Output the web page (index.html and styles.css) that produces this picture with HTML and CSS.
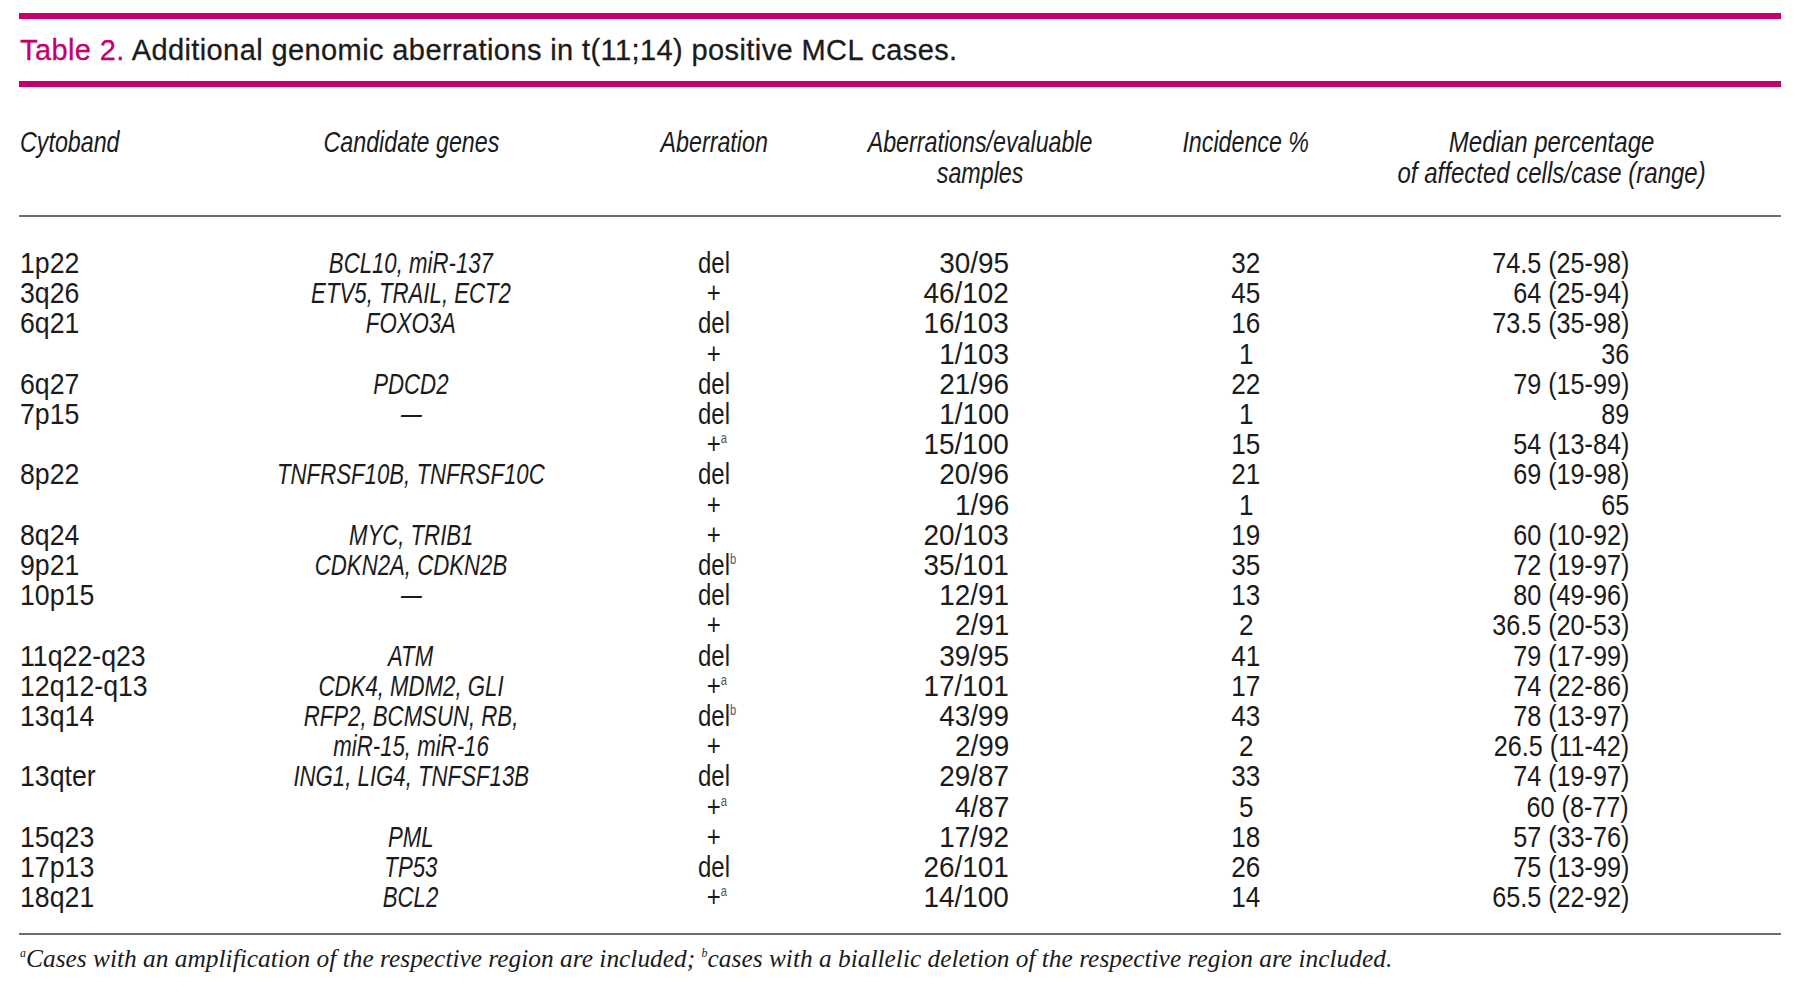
FILE: index.html
```html
<!DOCTYPE html>
<html lang="en">
<head>
<meta charset="utf-8">
<title>Table 2</title>
<link rel="stylesheet" href="styles.css">
</head>
<body>
<div class="page">
  <div class="pink-rule top"></div>
  <h1 class="caption"><span class="label">Table 2.</span> Additional genomic aberrations in t(11;14) positive MCL cases.</h1>
  <div class="pink-rule"></div>
  <table class="data">
    <colgroup>
      <col class="c1"><col class="c2"><col class="c3"><col class="c4"><col class="c5"><col class="c6">
    </colgroup>
    <thead>
      <tr>
        <th class="l"><span>Cytoband</span></th>
        <th><span>Candidate genes</span></th>
        <th><span>Aberration</span></th>
        <th><span>Aberrations/evaluable<br>samples</span></th>
        <th><span>Incidence %</span></th>
        <th class="med"><span>Median percentage<br>of affected cells/case (range)</span></th>
      </tr>
    </thead>
    <tbody>
      <tr class="first"><td><span>1p22</span></td><td class="g"><span>BCL10, miR-137</span></td><td class="a"><span>del</span></td><td class="n"><span>30/95</span></td><td class="i"><span>32</span></td><td class="m"><span>74.5 (25-98)</span></td></tr>
      <tr><td><span>3q26</span></td><td class="g"><span>ETV5, TRAIL, ECT2</span></td><td class="a"><span>+</span></td><td class="n"><span>46/102</span></td><td class="i"><span>45</span></td><td class="m"><span>64 (25-94)</span></td></tr>
      <tr><td><span>6q21</span></td><td class="g"><span>FOXO3A</span></td><td class="a"><span>del</span></td><td class="n"><span>16/103</span></td><td class="i"><span>16</span></td><td class="m"><span>73.5 (35-98)</span></td></tr>
      <tr><td></td><td class="g"></td><td class="a"><span>+</span></td><td class="n"><span>1/103</span></td><td class="i"><span>1</span></td><td class="m"><span>36</span></td></tr>
      <tr><td><span>6q27</span></td><td class="g"><span>PDCD2</span></td><td class="a"><span>del</span></td><td class="n"><span>21/96</span></td><td class="i"><span>22</span></td><td class="m"><span>79 (15-99)</span></td></tr>
      <tr><td><span>7p15</span></td><td class="g"><span class="dash">–</span></td><td class="a"><span>del</span></td><td class="n"><span>1/100</span></td><td class="i"><span>1</span></td><td class="m"><span>89</span></td></tr>
      <tr><td></td><td class="g"></td><td class="a"><span>+<i class="sup">a</i></span></td><td class="n"><span>15/100</span></td><td class="i"><span>15</span></td><td class="m"><span>54 (13-84)</span></td></tr>
      <tr><td><span>8p22</span></td><td class="g"><span>TNFRSF10B, TNFRSF10C</span></td><td class="a"><span>del</span></td><td class="n"><span>20/96</span></td><td class="i"><span>21</span></td><td class="m"><span>69 (19-98)</span></td></tr>
      <tr><td></td><td class="g"></td><td class="a"><span>+</span></td><td class="n"><span>1/96</span></td><td class="i"><span>1</span></td><td class="m"><span>65</span></td></tr>
      <tr><td><span>8q24</span></td><td class="g"><span>MYC, TRIB1</span></td><td class="a"><span>+</span></td><td class="n"><span>20/103</span></td><td class="i"><span>19</span></td><td class="m"><span>60 (10-92)</span></td></tr>
      <tr><td><span>9p21</span></td><td class="g"><span>CDKN2A, CDKN2B</span></td><td class="a"><span>del<i class="sup">b</i></span></td><td class="n"><span>35/101</span></td><td class="i"><span>35</span></td><td class="m"><span>72 (19-97)</span></td></tr>
      <tr><td><span>10p15</span></td><td class="g"><span class="dash">–</span></td><td class="a"><span>del</span></td><td class="n"><span>12/91</span></td><td class="i"><span>13</span></td><td class="m"><span>80 (49-96)</span></td></tr>
      <tr><td></td><td class="g"></td><td class="a"><span>+</span></td><td class="n"><span>2/91</span></td><td class="i"><span>2</span></td><td class="m"><span>36.5 (20-53)</span></td></tr>
      <tr><td><span>11q22-q23</span></td><td class="g"><span>ATM</span></td><td class="a"><span>del</span></td><td class="n"><span>39/95</span></td><td class="i"><span>41</span></td><td class="m"><span>79 (17-99)</span></td></tr>
      <tr><td><span>12q12-q13</span></td><td class="g"><span>CDK4, MDM2, GLI</span></td><td class="a"><span>+<i class="sup">a</i></span></td><td class="n"><span>17/101</span></td><td class="i"><span>17</span></td><td class="m"><span>74 (22-86)</span></td></tr>
      <tr><td><span>13q14</span></td><td class="g"><span>RFP2, BCMSUN, RB,</span></td><td class="a"><span>del<i class="sup">b</i></span></td><td class="n"><span>43/99</span></td><td class="i"><span>43</span></td><td class="m"><span>78 (13-97)</span></td></tr>
      <tr><td></td><td class="g"><span>miR-15, miR-16</span></td><td class="a"><span>+</span></td><td class="n"><span>2/99</span></td><td class="i"><span>2</span></td><td class="m"><span>26.5 (11-42)</span></td></tr>
      <tr><td><span>13qter</span></td><td class="g"><span>ING1, LIG4, TNFSF13B</span></td><td class="a"><span>del</span></td><td class="n"><span>29/87</span></td><td class="i"><span>33</span></td><td class="m"><span>74 (19-97)</span></td></tr>
      <tr><td></td><td class="g"></td><td class="a"><span>+<i class="sup">a</i></span></td><td class="n"><span>4/87</span></td><td class="i"><span>5</span></td><td class="m"><span>60 (8-77)</span></td></tr>
      <tr><td><span>15q23</span></td><td class="g"><span>PML</span></td><td class="a"><span>+</span></td><td class="n"><span>17/92</span></td><td class="i"><span>18</span></td><td class="m"><span>57 (33-76)</span></td></tr>
      <tr><td><span>17p13</span></td><td class="g"><span>TP53</span></td><td class="a"><span>del</span></td><td class="n"><span>26/101</span></td><td class="i"><span>26</span></td><td class="m"><span>75 (13-99)</span></td></tr>
      <tr class="last"><td><span>18q21</span></td><td class="g"><span>BCL2</span></td><td class="a"><span>+<i class="sup">a</i></span></td><td class="n"><span>14/100</span></td><td class="i"><span>14</span></td><td class="m"><span>65.5 (22-92)</span></td></tr>
    </tbody>
  </table>
  <p class="footnote"><span class="fsup">a</span>Cases with an amplification of the respective region are included; <span class="fsup">b</span>cases with a biallelic deletion of the respective region are included.</p>
</div>
</body>
</html>
```

FILE: styles.css
```css
html, body {
  margin: 0;
  padding: 0;
  background: #ffffff;
}

.page {
  width: 1762px;
  margin-left: 19px;
  padding-top: 13px;
  color: #1b1b1b;
}

.pink-rule {
  height: 6px;
  background: #c4006e;
}

.caption {
  margin: 0;
  height: 61px;
  padding: 1px 0 0 1px;
  font-family: "Liberation Sans", Arial, sans-serif;
  font-weight: normal;
  font-size: 29px;
  letter-spacing: 0.4px;
  line-height: 61px;
  color: #1b1b1b;
  -webkit-text-stroke: 0.3px #1b1b1b;
}

.caption .label {
  color: #c4006e;
  -webkit-text-stroke: 0.3px #c4006e;
}

.data {
  width: 1762px;
  border-collapse: collapse;
  table-layout: fixed;
  font-family: "Liberation Sans", Arial, sans-serif;
  font-size: 30px;
}

.c1 { width: 241px; }
.c2 { width: 302px; }
.c3 { width: 304px; }
.c4 { width: 228px; }
.c5 { width: 304px; }
.c6 { width: 383px; }

.data span {
  display: inline-block;
  white-space: nowrap;
  transform: scaleX(0.87);
  transform-origin: 50% 50%;
}

.data th {
  font-weight: normal;
  font-style: italic;
  text-align: center;
  vertical-align: top;
  line-height: 31px;
  padding: 39px 0 0;
  height: 89px;
  white-space: nowrap;
  border-bottom: 2px solid #6e6e6e;
}

.data th span {
  margin: 0 -120px;
  transform: scaleX(0.775);
}

.data th.med span {
  transform: scaleX(0.8);
}

.data th.l {
  text-align: left;
  padding-left: 1px;
}

.data th.l span {
  margin: 0;
  transform-origin: 0 50%;
}

.data th.med {
  padding-right: 75px;
}

.data td {
  padding: 0;
  line-height: 30.2px;
  height: 30.2px;
  text-align: left;
  white-space: nowrap;
}

.data td:first-child {
  padding-left: 1px;
}

.data td:first-child span {
  transform: scaleX(0.89);
  transform-origin: 0 50%;
}

.data tr.first td {
  padding-top: 31px;
}

.data tr.last td {
  padding-bottom: 21px;
  border-bottom: 2px solid #6e6e6e;
}

.data td.g {
  text-align: center;
  font-style: italic;
}

.data td.g span {
  margin: 0 -100px;
  transform: scaleX(0.74);
}

.data td.g span.dash {
  transform: scaleX(1.25);
}

.data td.a,
.data td.i {
  text-align: center;
}

.data td.a span {
  transform: scaleX(0.8);
}

.data td.n {
  text-align: right;
  padding-right: 85px;
}

.data td.n span {
  transform: scaleX(0.93);
}

.data td.m {
  text-align: right;
  padding-right: 152px;
}

.data td.m span {
  transform: scaleX(0.84);
}

.data td.n span,
.data td.m span {
  transform-origin: 100% 50%;
}

.sup {
  display: inline-block;
  width: 0;
  font-style: normal;
  font-size: 14px;
  line-height: 14px;
  vertical-align: 11px;
  color: #555555;
}

.footnote {
  margin: 0;
  padding: 8px 0 0 1px;
  font-family: "Liberation Serif", "Times New Roman", serif;
  font-style: italic;
  font-size: 25.4px;
  line-height: 30px;
  color: #1b1b1b;
}

.fsup {
  font-size: 12px;
  vertical-align: 10px;
  line-height: 12px;
}
```
